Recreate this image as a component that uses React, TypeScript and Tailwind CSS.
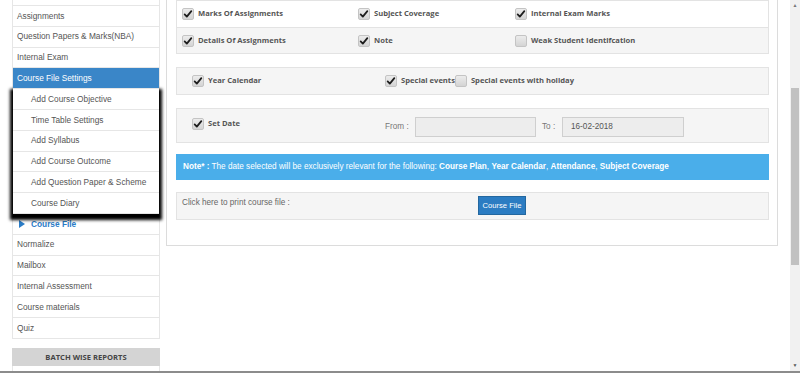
import React from 'react';

const topItems = ['', 'Assignments', 'Question Papers & Marks(NBA)', 'Internal Exam'];
const subItems = [
  'Add Course Objective',
  'Time Table Settings',
  'Add Syllabus',
  'Add Course Outcome',
  'Add Question Paper & Scheme',
  'Course Diary',
];
const bottomItems = ['Normalize', 'Mailbox', 'Internal Assessment', 'Course materials', 'Quiz'];

const arial = { fontFamily: '"Liberation Sans", Arial, sans-serif' };
const open = { fontFamily: '"Open Sans", "Liberation Sans", sans-serif' };

function Check({ checked = true }: { checked?: boolean }) {
  return (
    <span className="inline-flex w-[12px] h-[12px] shrink-0 items-center justify-center rounded-[2px] border border-[#c4c4c4] bg-gradient-to-b from-[#ececec] to-[#d4d4d4]">
      {checked && (
        <svg viewBox="0 0 12 12" className="w-[10px] h-[10px]">
          <path d="M2 6.5 L4.6 9.2 L10 2.5" fill="none" stroke="#1d1d1d" strokeWidth="2.1" strokeLinecap="round" strokeLinejoin="round" />
        </svg>
      )}
    </span>
  );
}

function Label({ text, checked = true }: { text: string; checked?: boolean }) {
  return (
    <div className="flex items-center gap-[4px]">
      <Check checked={checked} />
      <span className="text-[7.6px] font-bold text-[#555]" style={open}>
        {text}
      </span>
    </div>
  );
}

function Row({ children, className = '' }: { children?: React.ReactNode; className?: string }) {
  return (
    <div className={`h-[20.8px] flex items-center border-b border-[#e6e6e6] text-[8.3px] text-[#555] ${className}`} style={arial}>
      {children}
    </div>
  );
}

function Sidebar() {
  return (
    <div className="w-[166px] shrink-0 pl-[12px] pr-[6px] -mt-[14.8px]">
      <div className="w-[148px] border-x border-[#e6e6e6] bg-white">
        {topItems.map((t, i) => (
          <Row key={i} className="pl-[4px]">{t}</Row>
        ))}
        <Row className="pl-[4px] bg-[#3a86c8] text-white relative z-10 border-[#3a86c8]">Course File Settings</Row>
        <div className="relative shadow-[0_3px_3px_3px_#000] bg-white">
          {subItems.map((t) => (
            <Row key={t} className="pl-[18px]">{t}</Row>
          ))}
        </div>
        <Row className="pl-[6px] gap-[6px]">
          <svg viewBox="0 0 6 8" className="w-[6px] h-[8px]">
            <path d="M0 0 L6 4 L0 8 Z" fill="#2a7cc7" />
          </svg>
          <span className="font-bold text-[#2a7cc7]">Course File</span>
        </Row>
        {bottomItems.map((t) => (
          <Row key={t} className="pl-[4px]">{t}</Row>
        ))}
      </div>
      <div className="w-[148px] mt-[9.5px]">
        <div className="h-[18px] bg-[#d4d4d4] flex items-center justify-center text-[7.6px] font-bold text-[#444]" style={open}>
          BATCH WISE REPORTS
        </div>
        <div className="h-[20px] border-x border-[#e6e6e6] bg-white" />
      </div>
    </div>
  );
}

function Main() {
  return (
    <div className="flex-1 pr-[12px]">
      <div className="-mt-[1px] border border-[#dcdcdc] pl-[9px] pr-[8px] pt-0 pb-[25px]">
        {/* report options table */}
        <div className="border border-[#e3e3e3]">
          <div className="h-[26px] flex items-center pl-[5px] bg-white">
            <div className="w-[176px]"><Label text="Marks Of Assignments" /></div>
            <div className="w-[157px]"><Label text="Subject Coverage" /></div>
            <Label text="Internal Exam Marks" />
          </div>
          <div className="h-[26px] flex items-center pl-[5px] bg-[#f5f5f5] border-t border-[#e3e3e3]">
            <div className="w-[176px]"><Label text="Details Of Assignments" /></div>
            <div className="w-[157px]"><Label text="Note" /></div>
            <Label text="Weak Student Identifcation" checked={false} />
          </div>
        </div>

        <div className="mt-[13px] h-[28px] flex items-center pl-[15px] bg-[#f5f5f5] border border-[#e3e3e3]">
          <div className="w-[193px]"><Label text="Year Calendar" /></div>
          <div className="flex items-center">
            <Label text="Special events" />
            <Label text="Special events with holiday" checked={false} />
          </div>
        </div>

        <div className="mt-[13px] h-[35px] flex items-start pl-[15px] pt-[9px] bg-[#f5f5f5] border border-[#e3e3e3]">
          <div className="w-[193px]"><Label text="Set Date" /></div>
          <div className="flex items-center -mt-[1px] text-[8.2px] text-[#777]" style={arial}>
            <span className="w-[30px]">From :</span>
            <div className="w-[121px] h-[20px] bg-[#ededed] border border-[#cfcfcf]" />
            <span className="w-[20px] ml-[6px]">To :</span>
            <div className="w-[122px] h-[20px] bg-[#ededed] border border-[#cfcfcf] flex items-center pl-[8px] text-[#555]">16-02-2018</div>
          </div>
        </div>

        <div className="mt-[11px] h-[26px] flex items-center pl-[7px] bg-[#4aaeea] text-white text-[8.2px]" style={arial}>
          <span>
            <b>Note* :</b> The date selected will be exclusively relevant for the following: <b>Course Plan</b>, <b>Year Calendar</b>, <b>Attendance</b>, <b>Subject Coverage</b>
          </span>
        </div>

        <div className="mt-[12px] h-[28px] flex items-start pl-[5px] pt-[3px] bg-[#f5f5f5] border border-[#e3e3e3] text-[8.2px] text-[#666]" style={arial}>
          <span className="w-[296px] pt-[1px]">Click here to print course file :</span>
          <button className="w-[48px] h-[19px] bg-[#2b7cc2] border border-[#23679f] text-white text-[7.6px]" style={arial}>
            Course File
          </button>
        </div>
      </div>
    </div>
  );
}

function Scrollbar() {
  return (
    <div className="w-[10px] shrink-0 bg-[#f1f1f1] flex flex-col items-center">
      <span className="text-[5px] leading-none text-[#777] mt-[3px]">▲</span>
      <div className="w-[8px] h-[177px] bg-[#c1c1c1] mt-[80px]" />
      <div className="flex-1" />
      <span className="text-[5px] leading-none text-[#555] mb-[3px]">▼</span>
    </div>
  );
}

export default function App() {
  return (
    <div className="w-[800px] h-[373px] overflow-hidden bg-white flex border-b-2 border-[#8c8c8c]">
      <Sidebar />
      <Main />
      <Scrollbar />
    </div>
  );
}
